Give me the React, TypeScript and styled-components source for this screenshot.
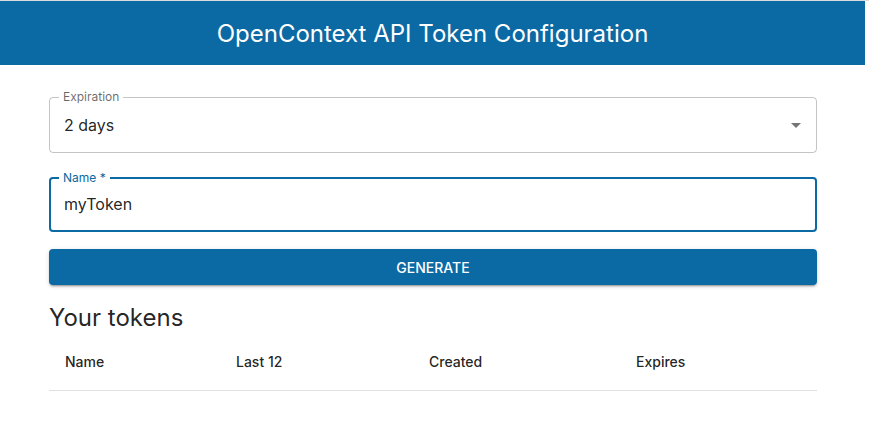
import React from "react";
import styled, { createGlobalStyle } from "styled-components";

const blue = "#0b69a3";

const GlobalStyle = createGlobalStyle`
  body {
    margin: 0;
    border-top: 1px solid #dcdcdc;
    background: #fff;
    font-family: Inter, "Noto Sans", sans-serif;
    color: rgba(0, 0, 0, 0.87);
  }
`;

const Header = styled.header`
  height: 64px;
  margin-right: 4px;
  background: ${blue};
  display: flex;
  align-items: center;
  justify-content: center;
`;

const Title = styled.h1`
  margin: 0;
  font-size: 24px;
  font-weight: 400;
  color: #fff;
`;

const Main = styled.main`
  width: 768px;
  margin: 26px 0 0 49px;
  display: flex;
  flex-direction: column;
`;

const Field = styled.fieldset<{ $focused?: boolean }>`
  margin: 0 0 ${(p) => (p.$focused ? "17px" : "19px")};
  padding: 0 ${(p) => (p.$focused ? "13px" : "14px")} ${(p) => (p.$focused ? "6px" : "5px")}
    ${(p) => (p.$focused ? "8px" : "9px")};
  border: ${(p) => (p.$focused ? `2px solid ${blue}` : "1px solid rgba(0, 0, 0, 0.23)")};
  border-radius: 4px;
  min-width: 0;
`;

const Legend = styled.legend<{ $focused?: boolean }>`
  padding: 0 4px;
  font-size: 12px;
  line-height: 12px;
  color: ${(p) => (p.$focused ? blue : "rgba(0, 0, 0, 0.6)")};
`;

const Control = styled.div<{ $focused?: boolean }>`
  height: ${(p) => (p.$focused ? "40px" : "44px")};
  display: flex;
  align-items: center;
`;

const Value = styled.div`
  flex: 1;
  padding-left: 5px;
  font-size: 16px;
  line-height: 23px;
  color: rgba(0, 0, 0, 0.87);
`;

const Arrow = styled.svg`
  width: 24px;
  height: 24px;
  margin-right: -6px;
  fill: rgba(0, 0, 0, 0.54);
`;

const Button = styled.button`
  height: 36px;
  border: 0;
  border-radius: 4px;
  background: ${blue};
  color: #fff;
  font-family: Inter, "Noto Sans", sans-serif;
  font-size: 14px;
  font-weight: 500;
  letter-spacing: 0;
  text-transform: uppercase;
  box-shadow: 0 3px 1px -2px rgba(0, 0, 0, 0.2), 0 2px 2px 0 rgba(0, 0, 0, 0.14),
    0 1px 5px 0 rgba(0, 0, 0, 0.12);
  cursor: pointer;
`;

const Heading = styled.h2`
  margin: 17px 0 0;
  font-size: 24px;
  font-weight: 400;
  line-height: 32px;
`;

const HeadRow = styled.div`
  display: grid;
  grid-template-columns: 171px 193px 207px 1fr;
  border-bottom: 1px solid rgb(224, 224, 224);
`;

const HeadCell = styled.div`
  padding: 16px;
  font-size: 14px;
  font-weight: 500;
  line-height: 24px;
`;

const columns = ["Name", "Last 12", "Created", "Expires"];

export default function App() {
  return (
    <>
      <GlobalStyle />
      <Header>
        <Title>OpenContext API Token Configuration</Title>
      </Header>
      <Main>
        <Field>
          <Legend>Expiration</Legend>
          <Control>
            <Value>2 days</Value>
            <Arrow viewBox="0 0 24 24">
              <path d="M7 10l5 5 5-5z" />
            </Arrow>
          </Control>
        </Field>
        <Field $focused>
          <Legend $focused>Name *</Legend>
          <Control $focused>
            <Value>myToken</Value>
          </Control>
        </Field>
        <Button>Generate</Button>
        <Heading>Your tokens</Heading>
        <HeadRow>
          {columns.map((c) => (
            <HeadCell key={c}>{c}</HeadCell>
          ))}
        </HeadRow>
      </Main>
    </>
  );
}
